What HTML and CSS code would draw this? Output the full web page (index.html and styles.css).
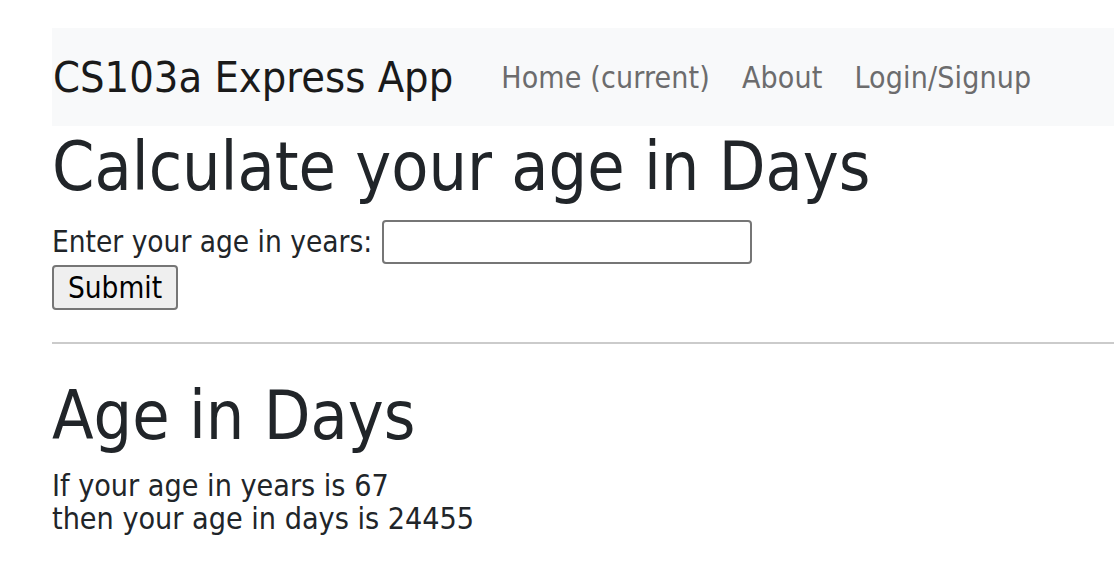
FILE: index.html
```html
<!DOCTYPE html>
<html lang="en">
<head>
<meta charset="utf-8">
<title>CS103a Express App</title>
<link rel="stylesheet" href="styles.css">
</head>
<body>
<nav class="navbar">
  <a class="brand" href="#">CS103a Express App</a>
  <ul class="nav-links">
    <li><a class="nav-link" href="#">Home (current)</a></li>
    <li><a class="nav-link" href="#">About</a></li>
    <li><a class="nav-link" href="#">Login/Signup</a></li>
  </ul>
</nav>
<main class="content">
  <h1 class="title">Calculate your age in Days</h1>
  <form class="age-form">
    <div class="form-row">
      <label class="label" for="age">Enter your age in years:</label>
      <input class="age-input" id="age" type="text">
    </div>
    <button class="submit" type="button">Submit</button>
  </form>
  <hr class="divider">
  <h2 class="title result-title">Age in Days</h2>
  <p class="result">If your age in years is 67<br>then your age in days is 24455</p>
</main>
</body>
</html>
```
FILE: styles.css
```css
html, body {
  background: #ffffff;
}
body {
  margin: 28px 0 0 52px;
  font-family: "DejaVu Sans Condensed", "DejaVu Sans", sans-serif;
  color: #212529;
}
.navbar {
  height: 98px;
  background: #f8f9fa;
  display: flex;
  align-items: center;
  box-sizing: border-box;
  padding-left: 1px;
}
.brand {
  font-size: 43px;
  color: #1a1a1a;
  text-decoration: none;
  line-height: 1;
  margin-right: 48px;
}
.nav-links {
  list-style: none;
  margin: 0;
  padding: 0;
  display: flex;
  gap: 32px;
  padding-top: 2px;
}
.nav-link {
  font-size: 30px;
  color: #6c6c6d;
  text-decoration: none;
  line-height: 1;
  letter-spacing: 0.15px;
}
.content {
  display: flex;
  flex-direction: column;
  align-items: flex-start;
}
.title {
  font-size: 67.6px;
  font-weight: normal;
  line-height: 81px;
  margin: 0;
  color: #212529;
}
.age-form {
  margin-top: 13px;
  display: flex;
  flex-direction: column;
  align-items: flex-start;
  gap: 1px;
}
.form-row {
  display: flex;
  align-items: center;
  gap: 10px;
  height: 44px;
}
.label {
  font-size: 29.5px;
  color: #212529;
}
.age-input {
  width: 370px;
  height: 44px;
  box-sizing: border-box;
  border: 2px solid #767676;
  border-radius: 4px;
  background: #fff;
  margin: 0;
  padding: 0 6px;
  font: inherit;
}
.submit {
  width: 126px;
  height: 45px;
  box-sizing: border-box;
  border: 2px solid #767676;
  border-radius: 4px;
  background: #efefef;
  font-family: "DejaVu Sans Condensed", "DejaVu Sans", sans-serif;
  font-size: 29.5px;
  color: #000;
  padding: 0;
  margin: 0;
}
.divider {
  width: 100%;
  box-sizing: border-box;
  margin: 32px 0 31px;
  border: 0;
  border-top: 2px solid #cbcbcb;
  height: 0;
}
.result {
  font-size: 30.2px;
  line-height: 33px;
  margin: 13px 0 0;
  color: #212529;
}
```
